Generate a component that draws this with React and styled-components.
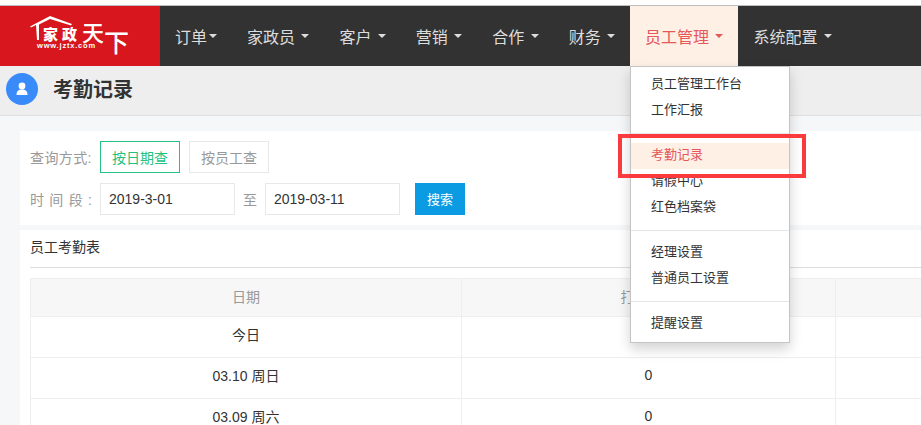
import React from "react";
import styled, { createGlobalStyle } from "styled-components";

const navItems = [
  { label: "订单", tight: true },
  { label: "家政员" },
  { label: "客户" },
  { label: "营销" },
  { label: "合作" },
  { label: "财务" },
  { label: "员工管理", active: true },
  { label: "系统配置" },
];

const menuGroups = [
  ["员工管理工作台", "工作汇报"],
  ["考勤记录", "请假中心", "红色档案袋"],
  ["经理设置", "普通员工设置"],
  ["提醒设置"],
];

const rows = [
  ["今日", "0"],
  ["03.10 周日", "0"],
  ["03.09 周六", "0"],
];

const Logo = () => (
  <svg width="160" height="60" viewBox="0 0 160 60">
    <path
      d="M30 20.500 L50 10 L72 18 L71 19.500 L50 13 L39 18.500 L39 34 L37 34 L36 19 L31 21.500 Z"
      fill="#fff"
    />
    <text x="43" y="33.500" fill="#fff" fontSize="15" fontWeight="900" fontFamily="'Noto Sans CJK SC', sans-serif" letterSpacing="4">
      家政
    </text>
    <text x="37" y="42" fill="#fff" fontSize="7.500" fontWeight="700" fontFamily="'Liberation Sans', sans-serif" letterSpacing="0.800">
      www.jztx.com
    </text>
    <text x="82" y="35" fill="#fff" fontSize="22" fontWeight="500" fontFamily="'Noto Sans CJK SC', sans-serif">
      天
    </text>
    <text x="104" y="46" fill="#fff" fontSize="25" fontWeight="500" fontFamily="'Noto Sans CJK SC', sans-serif">
      下
    </text>
  </svg>
);

const UserIcon = () => (
  <svg width="14" height="14" viewBox="0 0 14 14">
    <circle cx="7" cy="4" r="3.400" fill="#fff" />
    <path d="M1.500 13 C1.500 9 3.500 7.500 7 7.500 C10.500 7.500 12.500 9 12.500 13 Z" fill="#fff" />
  </svg>
);

const App = () => {
  return (
    <>
      <GlobalStyle />
      <Page>
        <Navbar>
          <Brand>
            <Logo />
          </Brand>
          {navItems.map((item) => (
            <NavItem key={item.label} $active={item.active}>
              {item.label}
              <Caret $tight={item.tight} />
              {item.active && (
                <Menu>
                  {menuGroups.map((group, i) => (
                    <React.Fragment key={i}>
                      {i > 0 && <Divider />}
                      {group.map((entry) => (
                        <MenuItem key={entry} $active={entry === "考勤记录"}>
                          {entry}
                        </MenuItem>
                      ))}
                    </React.Fragment>
                  ))}
                </Menu>
              )}
            </NavItem>
          ))}
        </Navbar>

        <PageHeader>
          <Avatar>
            <UserIcon />
          </Avatar>
          <Title>考勤记录</Title>
        </PageHeader>

        <Content>
          <Panel>
            <FormRow>
              <Label>查询方式:</Label>
              <Toggle $active>按日期查</Toggle>
              <Toggle>按员工查</Toggle>
            </FormRow>
            <FormRow>
              <Label $spread>时间段:</Label>
              <DateInput readOnly value="2019-3-01" />
              <To>至</To>
              <DateInput readOnly value="2019-03-11" />
              <SearchButton>搜索</SearchButton>
            </FormRow>
          </Panel>

          <TablePanel>
            <TableTitle>员工考勤表</TableTitle>
            <Table>
              <colgroup>
                <col width="431" />
                <col width="374" />
                <col width="200" />
              </colgroup>
              <thead>
                <tr>
                  <HeadCell>日期</HeadCell>
                  <HeadCell>打卡人数</HeadCell>
                  <HeadCell />
                </tr>
              </thead>
              <tbody>
                {rows.map(([date, count]) => (
                  <tr key={date}>
                    <Cell>{date}</Cell>
                    <Cell>{count}</Cell>
                    <Cell />
                  </tr>
                ))}
              </tbody>
            </Table>
          </TablePanel>
        </Content>

        <Highlight />
      </Page>
    </>
  );
};

export default App;

const GlobalStyle = createGlobalStyle`
  html, body {
    margin: 0;
    padding: 0;
    overflow: hidden;
    background: #fff;
  }
  * {
    box-sizing: border-box;
  }
`;

const Page = styled.div`
  position: relative;
  width: 921px;
  height: 425px;
  overflow: hidden;
  padding-top: 5px;
  font-family: "Liberation Sans", "Noto Sans CJK SC", sans-serif;
  font-size: 14px;
  color: #333;
`;

const Navbar = styled.nav`
  display: flex;
  height: 61px;
  border-top: 1px solid #bdbdbd;
  background: #323232;
`;

const Brand = styled.div`
  width: 160px;
  height: 60px;
  background: #d7161d;
  svg {
    display: block;
  }
`;

const NavItem = styled.div`
  position: relative;
  display: flex;
  align-items: center;
  height: 60px;
  padding: 0 15px;
  font-size: 16px;
  color: ${(p) => (p.$active ? "#e4585a" : "#ddd")};
  background: ${(p) => (p.$active ? "#fff0e6" : "transparent")};
`;

const Caret = styled.span`
  width: 0;
  height: 0;
  margin-left: ${(p) => (p.$tight ? "2px" : "6.4px")};
  border-top: 4px solid currentColor;
  border-left: 4px solid transparent;
  border-right: 4px solid transparent;
`;

const Menu = styled.div`
  position: absolute;
  top: 60px;
  left: 0;
  z-index: 5;
  width: 160px;
  padding: 5px 0;
  background: #fff;
  border: 1px solid #c4c4c4;
  box-shadow: 0 6px 12px rgba(0, 0, 0, 0.175);
`;

const MenuItem = styled.div`
  height: 26px;
  padding-left: 20px;
  font-size: 13px;
  line-height: 24px;
  color: ${(p) => (p.$active ? "#e4585a" : "#333")};
  background: ${(p) => (p.$active ? "#fff0e6" : "transparent")};
`;

const Divider = styled.div`
  height: 1px;
  margin: 9px 0;
  background: #e5e5e5;
`;

const PageHeader = styled.header`
  display: flex;
  align-items: center;
  height: 50px;
  padding-left: 6px;
  background: #eee;
  border-bottom: 1px solid #e0e0e0;
`;

const Avatar = styled.div`
  display: flex;
  align-items: center;
  justify-content: center;
  width: 32px;
  height: 32px;
  margin-top: -4px;
  border-radius: 50%;
  background: #3a8bfa;
`;

const Title = styled.h1`
  margin: -4px 0 0 15px;
  font-size: 20px;
  font-weight: 700;
  color: #333;
`;

const Content = styled.main`
  height: 310px;
  padding: 15px 0 0 20px;
  background: #f6f7f9;
`;

const Panel = styled.section`
  display: flex;
  flex-direction: column;
  gap: 10px;
  height: 94px;
  padding: 10px;
  background: #fff;
`;

const FormRow = styled.div`
  display: flex;
  align-items: center;
  height: 32px;
`;

const Label = styled.span`
  width: 62px;
  margin-right: 8px;
  color: #999;
  letter-spacing: ${(p) => (p.$spread ? "0" : "0.4px")};
  text-align: justify;
  text-align-last: ${(p) => (p.$spread ? "justify" : "left")};
  text-justify: inter-character;
  white-space: nowrap;
`;

const Toggle = styled.button`
  width: 80px;
  height: 32px;
  margin-right: 9px;
  padding: 0;
  font: inherit;
  background: #fff;
  color: ${(p) => (p.$active ? "#23c183" : "#999")};
  border: 1px solid ${(p) => (p.$active ? "#23c183" : "#e8e8e8")};
`;

const DateInput = styled.input`
  width: 135px;
  height: 32px;
  padding: 0 8px;
  font: inherit;
  color: #333;
  border: 1px solid #e8e8e8;
  outline: none;
`;

const To = styled.span`
  width: 30px;
  color: #999;
  text-align: center;
`;

const SearchButton = styled.button`
  width: 50px;
  height: 32px;
  margin-left: 15px;
  padding: 0 0 2px;
  font: inherit;
  font-size: 13px;
  color: #fff;
  background: #0b9be3;
  border: none;
`;

const TablePanel = styled.section`
  margin-top: 5px;
  padding: 0 0 0 10px;
  height: 200px;
  background: #fff;
`;

const TableTitle = styled.div`
  height: 38px;
  margin-bottom: 10px;
  line-height: 34px;
  font-size: 14px;
  border-bottom: 1px solid #ddd;
`;

const Table = styled.table`
  width: 1005px;
  table-layout: fixed;
  border-collapse: collapse;
`;

const HeadCell = styled.th`
  height: 38px;
  padding: 0 0 4px;
  font-weight: 400;
  color: #999;
  background: #f7f7f7;
  border: 1px solid #eee;
`;

const Cell = styled.td`
  height: 41px;
  padding: 0 0 6px;
  text-align: center;
  color: #333;
  border: 1px solid #eee;
`;

const Highlight = styled.div`
  position: absolute;
  top: 134px;
  left: 618px;
  z-index: 10;
  width: 188px;
  height: 44px;
  border: 4px solid #fb3a3e;
  pointer-events: none;
`;
